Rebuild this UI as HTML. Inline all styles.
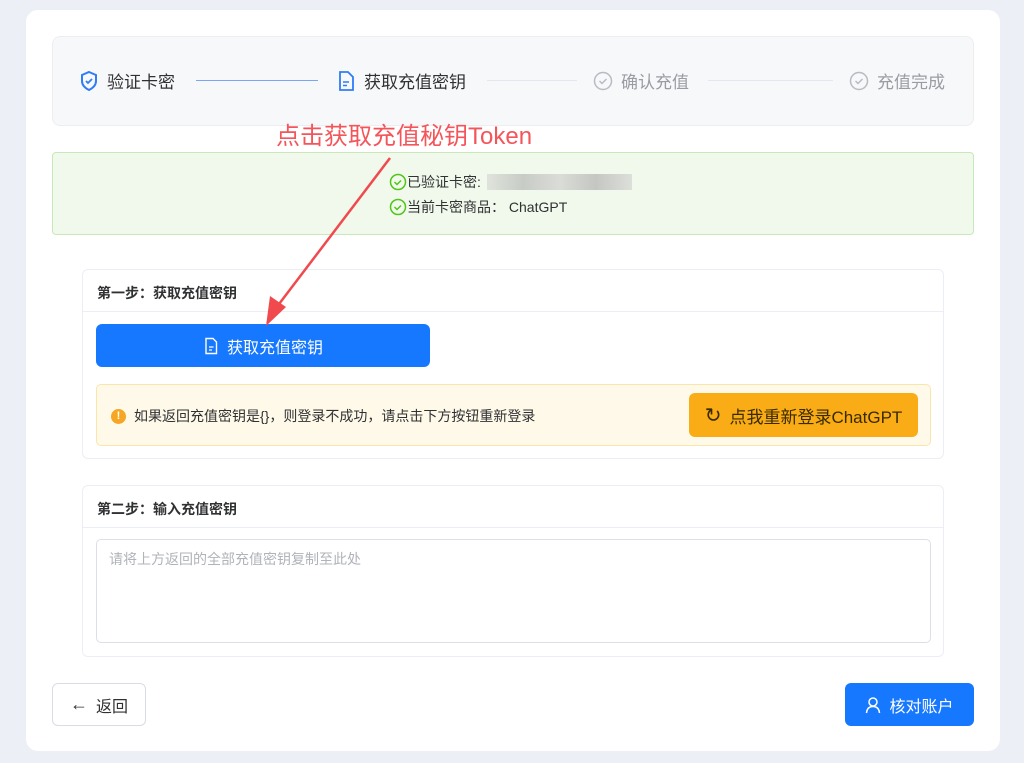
<!DOCTYPE html>
<html><head><meta charset="utf-8"><style>
*{box-sizing:border-box;margin:0;padding:0}
body{width:1024px;height:763px;background:#eceff5;font-family:"Liberation Sans","Noto Sans CJK SC",sans-serif;position:relative;overflow:hidden;color:#303133}
.card{position:absolute;left:26px;top:10px;width:974px;height:741px;background:#fff;border-radius:12px}
.steps{position:absolute;left:52px;top:36px;width:922px;height:90px;background:#f7f8fa;border:1px solid #eceef2;border-radius:8px}
.st{position:absolute;top:31px;font-size:17px;color:#303133;display:flex;align-items:center;gap:8px}
.line{position:absolute;top:43px;height:1px;background:#e4e7ed}
.ok{position:absolute;left:52px;top:152px;width:922px;height:83px;background:#f0f9eb;border:1px solid #c8e8b8;border-radius:4px;font-size:14px}
.sec{position:absolute;left:82px;width:862px;border:1px solid #ebeef5;border-radius:6px;background:#fff}
.sec h4{font-size:14px;font-weight:bold;padding:13px 14px 0;height:42px;border-bottom:1px solid #ebeef5}
.btn{position:absolute;display:flex;align-items:center;justify-content:center;gap:8px;border-radius:6px;font-size:16px}
</style></head><body>
<div class="card"></div>
<div class="steps">
 <div class="st" style="left:26px"><svg width="20" height="22" viewBox="0 0 20 22"><path d="M10 2 L17 5 V11 C17 15 14 18 10 20 C6 18 3 15 3 11 V5 Z" fill="none" stroke="#2f7cf6" stroke-width="2"/><path d="M7 11 l2 2 4-4" fill="none" stroke="#2f7cf6" stroke-width="1.8"/></svg>验证卡密</div>
 <div class="line" style="left:143px;width:122px;background:#7aa7f5"></div>
 <div class="st" style="left:283px"><svg width="20" height="22" viewBox="0 0 20 22"><path d="M4 2 H12 L17 7 V20 H4 Z" fill="none" stroke="#2f7cf6" stroke-width="1.8"/><path d="M7 12 H13 M7 15.5 H11" stroke="#2f7cf6" stroke-width="1.6"/></svg>获取充值密钥</div>
 <div class="line" style="left:434px;width:90px"></div>
 <div class="st" style="left:540px;color:#9a9ca3"><svg width="20" height="20" viewBox="0 0 20 20"><circle cx="10" cy="10" r="8.5" fill="none" stroke="#b8bbc2" stroke-width="1.5"/><path d="M6.5 10 l2.5 2.5 4.5-4.5" fill="none" stroke="#b8bbc2" stroke-width="1.5"/></svg>确认充值</div>
 <div class="line" style="left:655px;width:125px"></div>
 <div class="st" style="left:796px;color:#9a9ca3"><svg width="20" height="20" viewBox="0 0 20 20"><circle cx="10" cy="10" r="8.5" fill="none" stroke="#b8bbc2" stroke-width="1.5"/><path d="M6.5 10 l2.5 2.5 4.5-4.5" fill="none" stroke="#b8bbc2" stroke-width="1.5"/></svg>充值完成</div>
</div>
<div style="position:absolute;left:276px;top:116px;font-size:24px;color:#f4555a">点击获取充值秘钥Token</div>
<div class="ok">
 <div style="position:absolute;left:336px;top:19px;display:flex;align-items:center"><svg width="18" height="18" viewBox="0 0 18 18"><circle cx="9" cy="9" r="7.5" fill="none" stroke="#52c41a" stroke-width="1.5"/><path d="M5.5 9 l2.5 2.5 4-4" fill="none" stroke="#52c41a" stroke-width="1.5"/></svg>已验证卡密: <span style="display:inline-block;width:145px;height:16px;margin-left:6px;background:linear-gradient(90deg,#dfe3dc,#c8ccc6,#dadcd7,#c4c7c2,#dcdfda)"></span></div>
 <div style="position:absolute;left:336px;top:44px;display:flex;align-items:center"><svg width="18" height="18" viewBox="0 0 18 18"><circle cx="9" cy="9" r="7.5" fill="none" stroke="#52c41a" stroke-width="1.5"/><path d="M5.5 9 l2.5 2.5 4-4" fill="none" stroke="#52c41a" stroke-width="1.5"/></svg>当前卡密商品：&nbsp;ChatGPT</div>
</div>
<div class="sec" style="top:269px;height:190px"><h4>第一步：获取充值密钥</h4>
 <div class="btn" style="left:13px;top:54px;width:334px;height:43px;background:#1677ff;color:#fff"><svg width="16" height="18" viewBox="0 0 16 18"><path d="M3 1.5 H10 L13.5 5 V16.5 H3 Z" fill="none" stroke="#fff" stroke-width="1.4"/><path d="M6 10 H10.5 M6 13 H9" stroke="#fff" stroke-width="1.3"/></svg>获取充值密钥</div>
 <div style="position:absolute;left:13px;top:114px;width:835px;height:62px;background:#fef9e8;border:1px solid #fbe6a8;border-radius:5px">
  <div style="position:absolute;left:14px;top:21px;display:flex;align-items:center;gap:8px;font-size:14px"><span style="width:15px;height:15px;border-radius:50%;background:#f5a623;color:#fff;font-size:11px;font-weight:bold;display:flex;align-items:center;justify-content:center">!</span>如果返回充值密钥是{}，则登录不成功，请点击下方按钮重新登录</div>
  <div class="btn" style="left:592px;top:8px;width:229px;height:44px;background:#f9ac16;color:#3a2a00;font-size:17px"><span style="font-size:20px">↻</span>点我重新登录ChatGPT</div>
 </div>
</div>
<div class="sec" style="top:485px;height:172px"><h4>第二步：输入充值密钥</h4>
 <div style="position:absolute;left:13px;top:53px;width:835px;height:104px;border:1px solid #dcdfe6;border-radius:5px;padding:9px 12px;font-size:14px;color:#b0b3b9">请将上方返回的全部充值密钥复制至此处</div>
</div>
<div class="btn" style="left:52px;top:683px;width:94px;height:43px;border:1px solid #d9dce2;background:#fff;color:#303133"><span style="font-size:18px">←</span>返回</div>
<div class="btn" style="left:845px;top:683px;width:129px;height:43px;background:#1677ff;color:#fff"><svg width="16" height="18" viewBox="0 0 16 18"><circle cx="8" cy="6" r="4" fill="none" stroke="#fff" stroke-width="1.5"/><path d="M1.5 17 C2 12 5 10.5 8 10.5 C11 10.5 14 12 14.5 17" fill="none" stroke="#fff" stroke-width="1.5"/></svg>核对账户</div>
<svg style="position:absolute;left:0;top:0" width="1024" height="763"><line x1="390" y1="158" x2="276" y2="308" stroke="#f04a4e" stroke-width="2.5"/><path d="M266 326 L270 296 L286 307 Z" fill="#f04a4e"/></svg>
</body></html>
